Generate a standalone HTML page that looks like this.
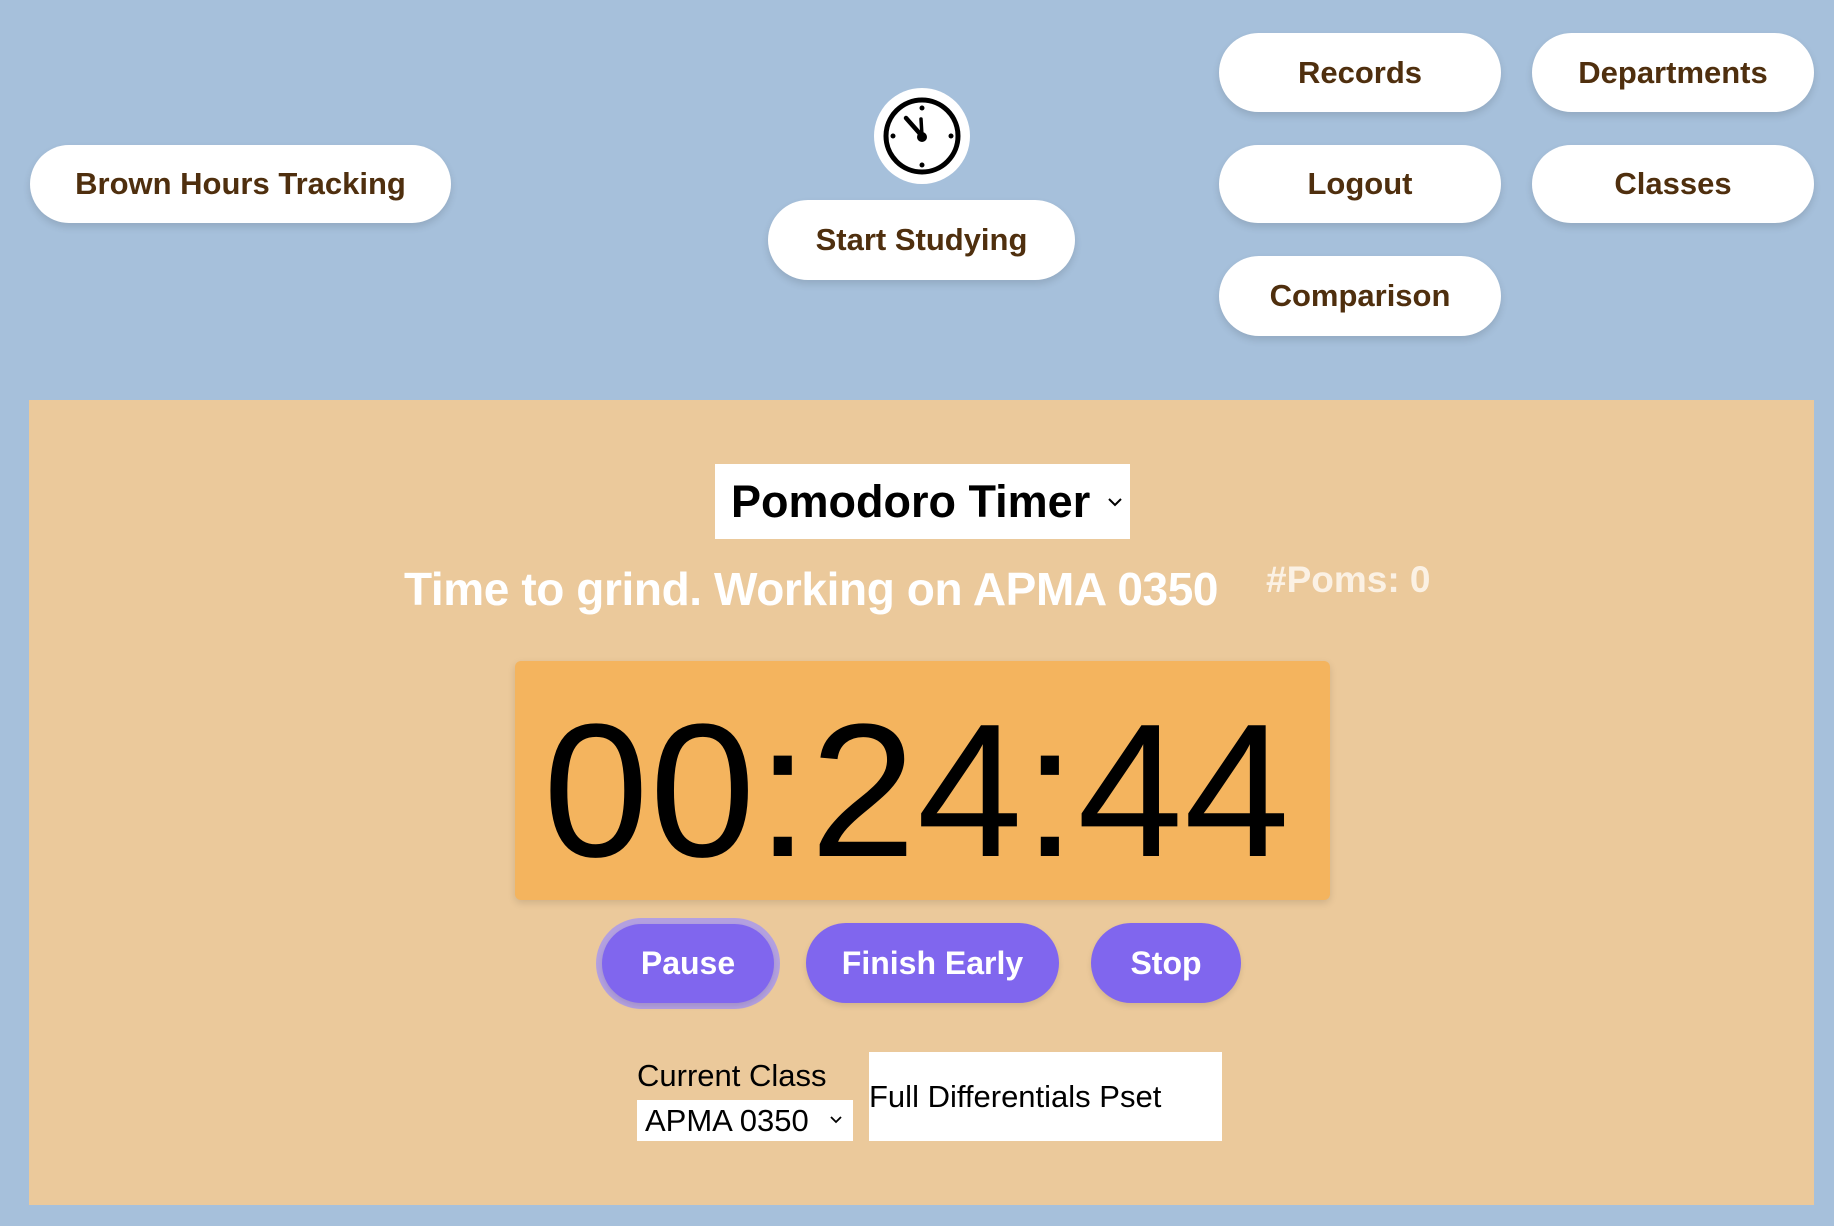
<!DOCTYPE html>
<html><head><meta charset="utf-8"><style>
*{margin:0;padding:0;box-sizing:border-box}
body{width:1834px;height:1226px;background:#a6c0db;position:relative;overflow:hidden;font-family:"Liberation Sans",sans-serif}
.b{position:absolute;background:#fff;border-radius:40px;color:#4f2f0e;font-weight:bold;font-size:31px;display:flex;align-items:center;justify-content:center;box-shadow:0 4px 8px rgba(0,0,0,.12)}
.p{position:absolute;background:#8066ee;border-radius:42px;color:#fff;font-weight:bold;font-size:32px;display:flex;align-items:center;justify-content:center;box-shadow:0 3px 6px rgba(0,0,0,.1)}
.t{position:absolute;white-space:nowrap}
</style></head><body>
<div class="b" style="left:30px;top:145px;width:421px;height:78px">Brown Hours Tracking</div>
<div style="position:absolute;left:874px;top:88px;width:96px;height:96px;border-radius:50%;background:#fff"></div>
<svg style="position:absolute;left:874px;top:88px" width="96" height="96" viewBox="0 0 96 96">
<circle cx="48" cy="48" r="36" fill="none" stroke="#000" stroke-width="5"/>
<circle cx="48" cy="20" r="2.5"/><circle cx="48" cy="77" r="2.5"/><circle cx="19" cy="48" r="2.5"/><circle cx="77" cy="48" r="2.5"/>
<line x1="48" y1="48" x2="32" y2="30" stroke="#000" stroke-width="4.5" stroke-linecap="round"/>
<line x1="48" y1="48" x2="47" y2="31" stroke="#000" stroke-width="3.5" stroke-linecap="round"/>
<circle cx="48" cy="49" r="5"/>
</svg>
<div class="b" style="left:768px;top:200px;width:307px;height:80px">Start Studying</div>
<div class="b" style="left:1219px;top:33px;width:282px;height:79px">Records</div>
<div class="b" style="left:1532px;top:33px;width:282px;height:79px">Departments</div>
<div class="b" style="left:1219px;top:145px;width:282px;height:78px">Logout</div>
<div class="b" style="left:1532px;top:145px;width:282px;height:78px">Classes</div>
<div class="b" style="left:1219px;top:256px;width:282px;height:80px">Comparison</div>
<div style="position:absolute;left:29px;top:400px;width:1785px;height:805px;background:#ebc99b"></div>
<div style="position:absolute;left:715px;top:464px;width:415px;height:75px;background:#fff;font-size:45px;font-weight:bold;line-height:75px;padding-left:16px;white-space:nowrap">Pomodoro Timer</div>
<svg style="position:absolute;left:1107px;top:496px" width="16" height="12" viewBox="0 0 16 12"><path d="M2 3 L8 9 L14 3" fill="none" stroke="#000" stroke-width="2"/></svg>
<div class="t" style="left:404px;top:562px;font-size:46px;font-weight:bold;color:#fff;letter-spacing:-0.4px">Time to grind. Working on APMA 0350</div>
<div class="t" style="left:1266px;top:559px;font-size:37px;font-weight:bold;color:#fbf1e4">#Poms: 0</div>
<div style="position:absolute;left:515px;top:661px;width:815px;height:239px;background:#f4b45e;border-radius:6px;box-shadow:0 3px 8px rgba(0,0,0,.12)"></div>
<div class="t" style="left:543px;top:681px;font-size:190px;line-height:220px;color:#000;letter-spacing:1px">00:24:44</div>
<div style="position:absolute;left:596px;top:918px;width:184px;height:91px;border-radius:46px;background:#b3a0e0"></div>
<div class="p" style="left:602px;top:924px;width:172px;height:79px">Pause</div>
<div class="p" style="left:806px;top:923px;width:253px;height:80px">Finish Early</div>
<div class="p" style="left:1091px;top:923px;width:150px;height:80px">Stop</div>
<div class="t" style="left:637px;top:1058px;font-size:31px">Current Class</div>
<div style="position:absolute;left:637px;top:1100px;width:216px;height:41px;background:#fff;font-size:31px;padding-left:8px;line-height:41px;white-space:nowrap">APMA 0350</div>
<svg style="position:absolute;left:829px;top:1115px" width="14" height="10" viewBox="0 0 14 10"><path d="M2 2 L7 7 L12 2" fill="none" stroke="#000" stroke-width="1.8"/></svg>
<div style="position:absolute;left:869px;top:1052px;width:353px;height:89px;background:#fff;font-size:31px;line-height:89px;white-space:nowrap">Full Differentials Pset</div>
</body></html>
